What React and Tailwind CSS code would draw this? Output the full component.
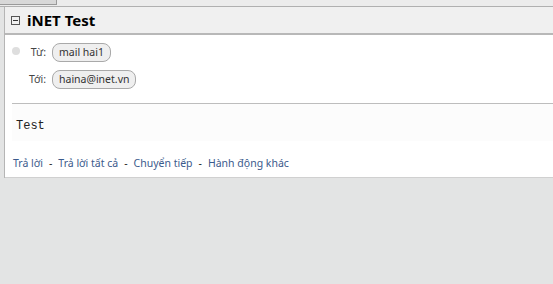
import React from "react";

const font = { fontFamily: "'Noto Sans', 'DejaVu Sans', sans-serif" };

function Pill({ children }) {
  return (
    <span className="inline-flex items-center h-[19px] px-[6px] rounded-[8px] border border-[#a9a9a9] bg-[#efefef] text-[10.5px] text-[#333] leading-none">
      {children}
    </span>
  );
}

export default function App() {
  const actions = ["Trả lời", "Trả lời tất cả", "Chuyển tiếp", "Hành động khác"];

  return (
    <div className="w-[553px] h-[284px] bg-[#e3e4e4] flex flex-col overflow-hidden" style={font}>
      {/* top strip */}
      <div className="h-[7px] bg-[#ececec] border-b border-[#b0b0b0] flex">
        <div className="w-[57px] h-[5px] bg-[#d8d8d8] border-b border-r border-[#9a9a9a]" />
      </div>

      <div className="ml-[4px] border-l border-[#b5b5b5] bg-white flex flex-col">
        {/* header */}
        <div className="h-[28px] bg-[#f0f0f0] border-b-2 border-[#b8b8b8] flex items-center pl-[6px] pt-[1px] gap-[7px]">
          <span className="w-[9px] h-[9px] border border-[#555] flex items-center justify-center">
            <span className="w-[5px] h-px bg-[#333]" />
          </span>
          <span className="text-[15px] font-bold text-black leading-none">iNET Test</span>
        </div>

        {/* from / to */}
        <div className="flex pt-[8px] pb-[14px]">
          <div className="w-[20px] flex justify-center pt-[4px] pl-[2px]">
            <span className="w-[8px] h-[8px] rounded-full bg-[#dedede]" />
          </div>
          <div className="flex flex-col gap-[8px]">
            <div className="flex items-center gap-[6px]">
              <span className="w-[21px] text-right text-[10.5px] text-[#444]">Từ:</span>
              <Pill>mail hai1</Pill>
            </div>
            <div className="flex items-center gap-[6px]">
              <span className="w-[21px] text-right text-[10.5px] text-[#444]">Tới:</span>
              <Pill>haina@inet.vn</Pill>
            </div>
          </div>
        </div>

        {/* body */}
        <div className="ml-[7px] border-t border-[#bdbdbd] bg-[#fcfcfc] h-[38px] flex items-center pl-[4px] pt-[6px]">
          <span className="text-[12px] text-[#222]" style={{ fontFamily: "'Liberation Mono', monospace" }}>
            Test
          </span>
        </div>

        {/* actions */}
        <div className="h-[37px] flex items-center pl-[8px] pt-[10px] text-[10.5px] border-b border-[#d0d0d0]">
          {actions.map((a, i) => (
            <React.Fragment key={a}>
              {i > 0 && <span className="text-[#222] px-[6px]">-</span>}
              <span className="text-[#3b5a8c]">{a}</span>
            </React.Fragment>
          ))}
        </div>
      </div>
    </div>
  );
}
